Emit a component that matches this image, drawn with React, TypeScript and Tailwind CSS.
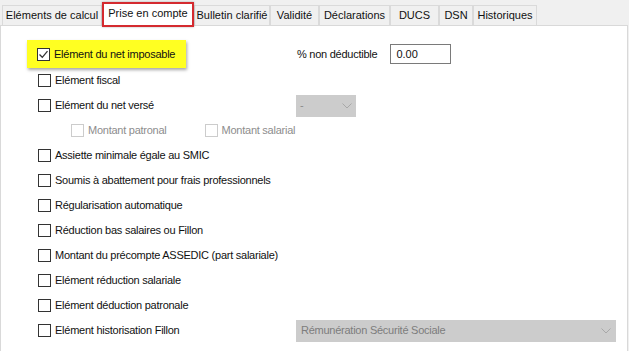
import React from "react";

const font = { fontFamily: '"Liberation Sans", Arial, sans-serif' };

function Check({ checked = false, disabled = false }: { checked?: boolean; disabled?: boolean }) {
  return (
    <span
      className={`inline-flex h-[13px] w-[13px] shrink-0 items-center justify-center border bg-white ${
        disabled ? "border-[#cccccc]" : "border-[#333333]"
      }`}
    >
      {checked && (
        <svg width="11" height="11" viewBox="0 0 11 11">
          <path d="M1.5 5.5 L4.3 8.3 L9.5 2.2" fill="none" stroke="#333" strokeWidth="1.3" />
        </svg>
      )}
    </span>
  );
}

function Chevron() {
  return (
    <svg width="10" height="6" viewBox="0 0 10 6">
      <path d="M0.5 0.5 L5 5 L9.5 0.5" fill="none" stroke="#a8a8a8" strokeWidth="1" />
    </svg>
  );
}

const tabs = [
  { label: "Eléments de calcul", w: "w-[100px]" },
  { label: "Prise en compte", w: "w-[92px]", active: true },
  { label: "Bulletin clarifié", w: "w-[76px]" },
  { label: "Validité", w: "w-[49px]" },
  { label: "Déclarations", w: "w-[71px]" },
  { label: "DUCS", w: "w-[49px]" },
  { label: "DSN", w: "w-[34px]" },
  { label: "Historiques", w: "w-[64px]" },
];

function Row({ label, children }: { label: string; children?: React.ReactNode }) {
  return (
    <div className="flex h-[25px] items-center">
      <div className="flex w-[259px] items-center gap-[4px] pl-[37px]">
        <Check />
        <span className="tracking-[-0.25px]">{label}</span>
      </div>
      {children}
    </div>
  );
}

export default function App() {
  return (
    <div className="h-[351px] w-[629px] overflow-hidden whitespace-nowrap bg-[#f0f0f0] text-[11px] text-[#111]" style={font}>
      {/* Tab strip */}
      <div className="flex h-[25px] items-end pl-[2px]">
        {tabs.map((t) =>
          t.active ? (
            <div
              key={t.label}
              className={`relative z-10 mb-[-2px] flex h-[25px] ${t.w} items-center justify-center border-2 border-[#d42a2f] bg-white pb-[2px] shadow-[0_0_2px_rgba(0,0,0,0.3)]`}
            >
              {t.label}
            </div>
          ) : (
            <div
              key={t.label}
              className={`flex h-[20px] ${t.w} items-center justify-center border border-b-0 border-[#dadada] bg-[#f0f0f0] pb-[1px]`}
            >
              {t.label}
            </div>
          )
        )}
      </div>
      {/* Content */}
      <div className="h-[326px] w-[628px] border-l border-r border-t border-[#d9d9d9] bg-white pt-[14px]">
        {/* highlighted row */}
        <div className="flex h-[28px] items-center">
          <div className="flex w-[259px] items-center">
            <div className="ml-[26px] flex h-[28px] w-[159px] items-center gap-[4px] bg-[#ffff22] pl-[10px] shadow-[1px_2px_3px_rgba(0,0,0,0.35)]">
              <Check checked />
              <span className="tracking-[-0.25px]">Elément du net imposable</span>
            </div>
          </div>
          <span className="ml-[37px] tracking-[-0.25px]">% non déductible</span>
          <div className="ml-[13px] flex h-[20px] w-[61px] items-center border border-[#7a7a7a] bg-white pl-[5px]">0.00</div>
        </div>
        <div className="flex flex-col">
          <Row label="Elément fiscal" />
          <Row label="Elément du net versé">
            <div className="ml-[36px] flex h-[22px] w-[60px] items-center justify-between bg-[#cccccc] pl-[4px] pr-[4px] text-[#8a8a8a]">
              <span>-</span>
              <Chevron />
            </div>
          </Row>
          <div className="flex h-[25px] items-center text-[#8d8d8d]">
            <div className="flex items-center gap-[4px] pl-[70px]">
              <Check disabled />
              <span className="tracking-[-0.25px]">Montant patronal</span>
            </div>
            <div className="ml-[38px] flex items-center gap-[4px]">
              <Check disabled />
              <span className="tracking-[-0.25px]">Montant salarial</span>
            </div>
          </div>
          <Row label="Assiette minimale égale au SMIC" />
          <Row label="Soumis à abattement pour frais professionnels" />
          <Row label="Régularisation automatique" />
          <Row label="Réduction bas salaires ou Fillon" />
          <Row label="Montant du précompte ASSEDIC (part salariale)" />
          <Row label="Elément réduction salariale" />
          <Row label="Elément déduction patronale" />
          <Row label="Elément historisation Fillon">
            <div className="ml-[36px] flex h-[22px] w-[320px] items-center justify-between bg-[#cccccc] pl-[5px] pr-[5px] text-[#7d7d7d]">
              <span className="tracking-[-0.25px]">Rémunération Sécurité Sociale</span>
              <Chevron />
            </div>
          </Row>
        </div>
      </div>
    </div>
  );
}
